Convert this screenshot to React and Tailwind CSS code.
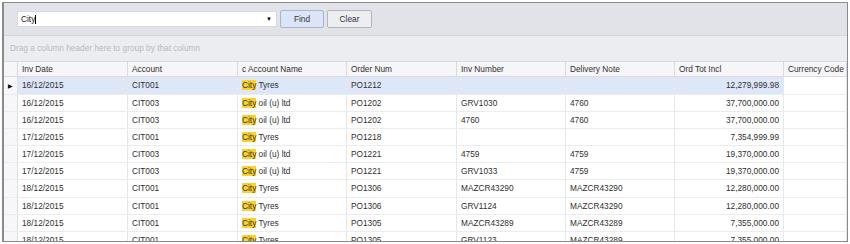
import React from 'react';

const columns = [
  { key: 'date', label: 'Inv Date', width: 'w-[110px]' },
  { key: 'account', label: 'Account', width: 'w-[110px]' },
  { key: 'name', label: 'c Account Name', width: 'w-[109px]' },
  { key: 'order', label: 'Order Num', width: 'w-[110px]' },
  { key: 'inv', label: 'Inv Number', width: 'w-[109px]' },
  { key: 'note', label: 'Delivery Note', width: 'w-[109px]' },
  { key: 'total', label: 'Ord Tot Incl', width: 'w-[109px]', right: true },
  { key: 'currency', label: 'Currency Code', width: 'flex-1' },
];

const rows = [
  ['16/12/2015', 'CIT001', ' Tyres', 'PO1212', '', '', '12,279,999.98'],
  ['16/12/2015', 'CIT003', ' oil (u) ltd', 'PO1202', 'GRV1030', '4760', '37,700,000.00'],
  ['16/12/2015', 'CIT003', ' oil (u) ltd', 'PO1202', '4760', '4760', '37,700,000.00'],
  ['17/12/2015', 'CIT001', ' Tyres', 'PO1218', '', '', '7,354,999.99'],
  ['17/12/2015', 'CIT003', ' oil (u) ltd', 'PO1221', '4759', '4759', '19,370,000.00'],
  ['17/12/2015', 'CIT003', ' oil (u) ltd', 'PO1221', 'GRV1033', '4759', '19,370,000.00'],
  ['18/12/2015', 'CIT001', ' Tyres', 'PO1306', 'MAZCR43290', 'MAZCR43290', '12,280,000.00'],
  ['18/12/2015', 'CIT001', ' Tyres', 'PO1306', 'GRV1124', 'MAZCR43290', '12,280,000.00'],
  ['18/12/2015', 'CIT001', ' Tyres', 'PO1305', 'MAZCR43289', 'MAZCR43289', '7,355,000.00'],
  ['18/12/2015', 'CIT001', ' Tyres', 'PO1305', 'GRV1123', 'MAZCR43289', '7,355,000.00'],
];

const GridRow = ({ row, selected, tall }) => (
  <div className={`flex ${tall ? 'h-[18px]' : 'h-[17px]'} shrink-0 border-b border-[#ececef]`}>
    <div className="w-[14px] shrink-0 border-r border-[#dfe0e4] bg-[#f7f7f9] flex items-center justify-center">
      {selected && <span className="text-[6px] text-black leading-none">▶</span>}
    </div>
    {columns.map((col, i) => {
      const focused = selected && col.key === 'currency';
      const bg = selected && !focused ? 'bg-[#dee7f8]' : 'bg-white';
      return (
        <div
          key={col.key}
          className={`${col.width} shrink-0 border-r border-[#e6e7ea] px-[4px] flex items-center whitespace-nowrap overflow-hidden ${bg} ${col.right ? 'justify-end' : ''}`}
        >
          {col.key === 'name' ? (
            <span>
              <span className="bg-[#fbd22c]">City</span>
              {row[i]}
            </span>
          ) : (
            row[i] || ''
          )}
        </div>
      );
    })}
  </div>
);

const App = () => {
  return (
    <div
      className="w-[850px] h-[244px] bg-white pt-[2px] pl-[2px] overflow-hidden text-[8.3px] text-[#2f2f2f]"
      style={{ fontFamily: '"Liberation Sans", Arial, sans-serif' }}
    >
      <div className="w-[846px] h-[240px] border border-l-2 border-[#8a8a8a] flex flex-col overflow-hidden">
        {/* Search panel */}
        <div className="h-[33px] shrink-0 bg-[#e2e3e8] border-b border-[#d3d5da] flex items-start pl-[13px] pt-[8px] gap-[3px]">
          <div className="w-[260px] h-[16px] bg-white border border-[#d7d9de] flex items-center pl-[3px] pr-[4px]">
            <span className="text-[#222]">City</span>
            <span className="w-px h-[9px] bg-black" />
            <span className="ml-auto text-[6px] text-black leading-none">▼</span>
          </div>
          <button className="w-[44px] h-[18px] -mt-px rounded-[2px] border border-[#a6b6d2] bg-[#dbe5f7] text-[#333]">
            Find
          </button>
          <button className="w-[45px] h-[18px] -mt-px rounded-[2px] border border-[#b3b5bb] bg-[#eceef1] text-[#333]">
            Clear
          </button>
        </div>

        {/* Group panel */}
        <div className="h-[25px] shrink-0 bg-[#ecedf1] flex items-center pl-[6px] text-[#b9bbc0]">
          Drag a column header here to group by that column
        </div>

        {/* Header */}
        <div className="flex h-[16px] shrink-0 bg-[#f6f6f8] border-t border-b border-[#d8dadf]">
          <div className="w-[14px] shrink-0 border-r border-[#d8dadf]" />
          {columns.map(col => (
            <div
              key={col.key}
              className={`${col.width} shrink-0 border-r border-[#d8dadf] px-[4px] flex items-center whitespace-nowrap overflow-hidden`}
            >
              {col.label}
            </div>
          ))}
        </div>

        {/* Rows */}
        {rows.map((row, idx) => (
          <GridRow key={idx} row={row} selected={idx === 0} tall={idx === 0 || idx === 6} />
        ))}
      </div>
    </div>
  );
};

export default App;
